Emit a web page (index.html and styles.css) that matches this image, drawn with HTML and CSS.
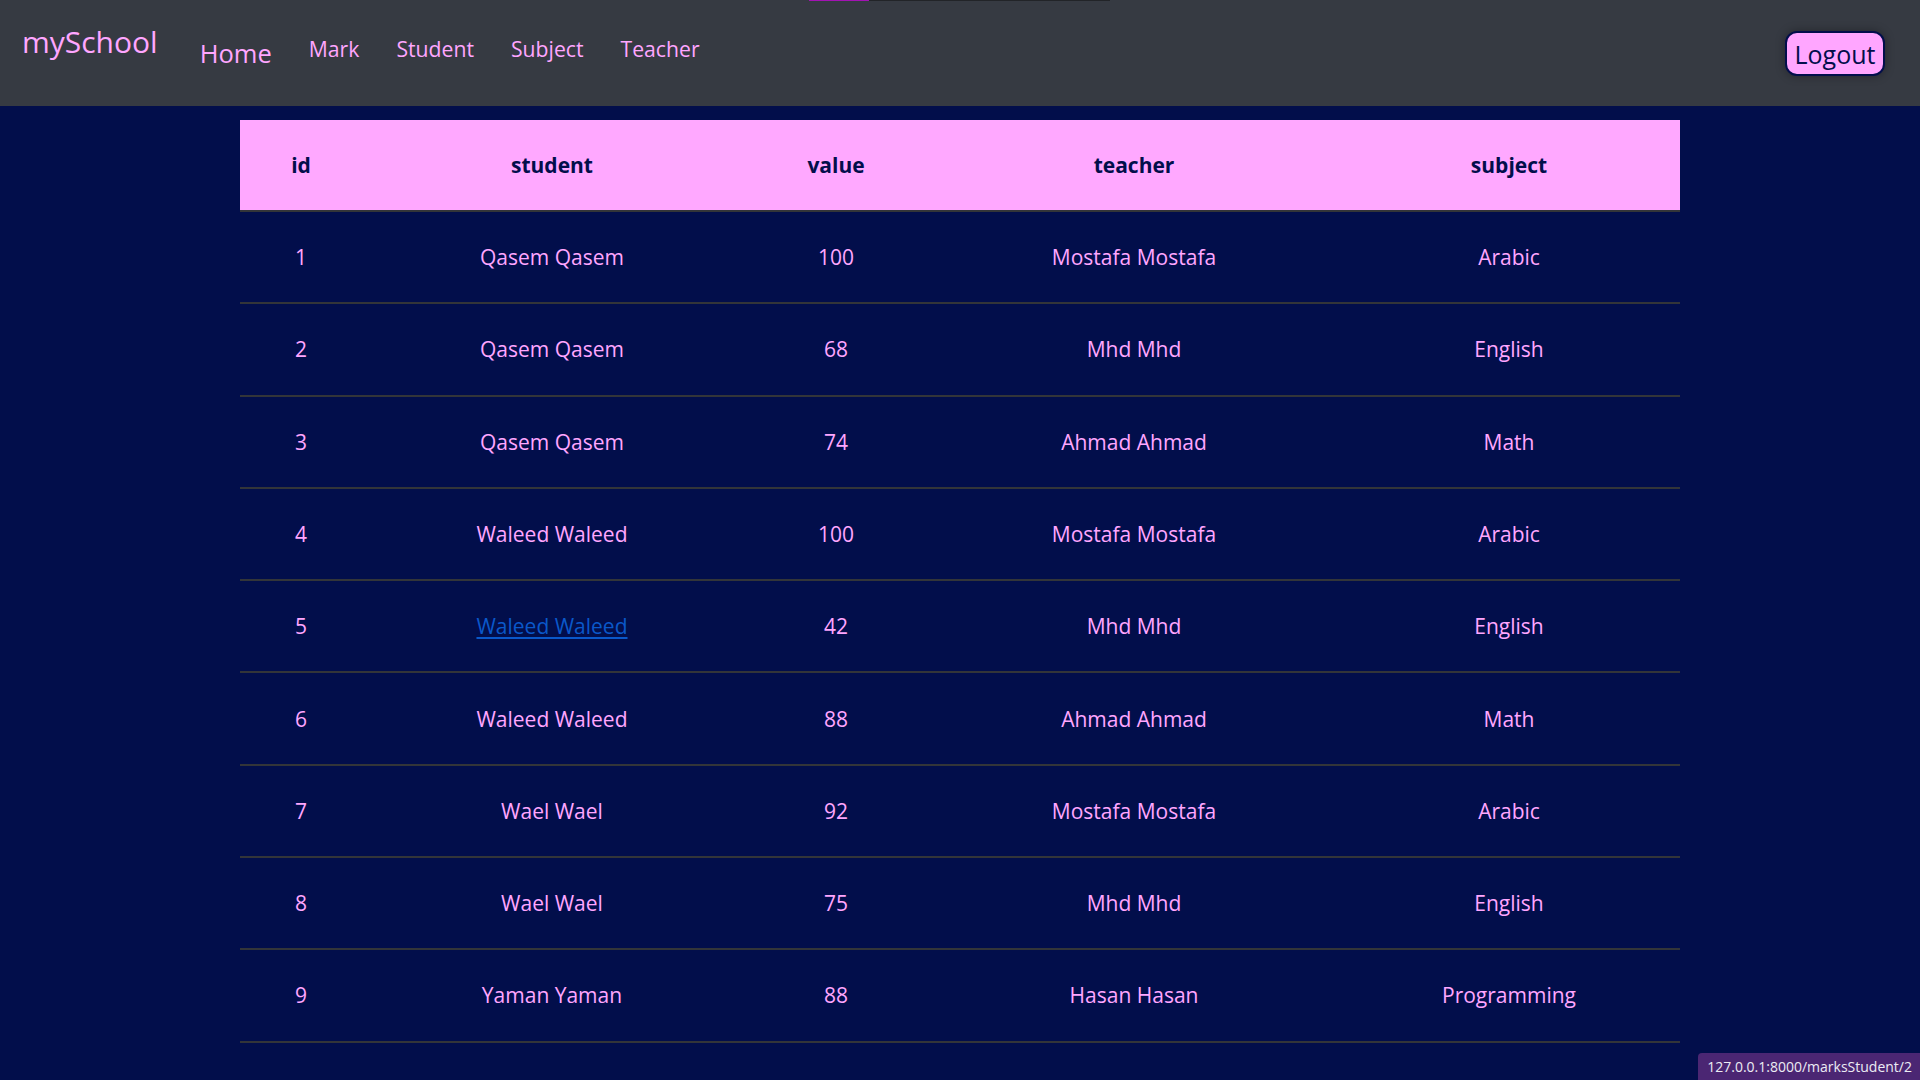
FILE: index.html
```html
<!DOCTYPE html>
<html lang="en">
<head>
<meta charset="utf-8">
<title>mySchool</title>
<link rel="stylesheet" href="styles.css">
</head>
<body>
<div class="loader"><div class="loader-fill"></div></div>
<header class="navbar">
  <a class="brand" href="#">mySchool</a>
  <nav class="nav-links">
    <a class="nav-home" href="#">Home</a>
    <a class="nav-link" href="#">Mark</a>
    <a class="nav-link" href="#">Student</a>
    <a class="nav-link" href="#">Subject</a>
    <a class="nav-link" href="#">Teacher</a>
  </nav>
  <button class="logout">Logout</button>
</header>
<main class="content">
  <table class="marks">
    <colgroup>
      <col class="c-id"><col class="c-student"><col class="c-value"><col class="c-teacher"><col class="c-subject">
    </colgroup>
    <thead>
      <tr><th>id</th><th>student</th><th>value</th><th>teacher</th><th>subject</th></tr>
    </thead>
    <tbody>
      <tr><td>1</td><td><a href="#">Qasem Qasem</a></td><td>100</td><td>Mostafa Mostafa</td><td>Arabic</td></tr>
      <tr><td>2</td><td><a href="#">Qasem Qasem</a></td><td>68</td><td>Mhd Mhd</td><td>English</td></tr>
      <tr><td>3</td><td><a href="#">Qasem Qasem</a></td><td>74</td><td>Ahmad Ahmad</td><td>Math</td></tr>
      <tr><td>4</td><td><a href="#">Waleed Waleed</a></td><td>100</td><td>Mostafa Mostafa</td><td>Arabic</td></tr>
      <tr><td>5</td><td><a class="hovered" href="#">Waleed Waleed</a></td><td>42</td><td>Mhd Mhd</td><td>English</td></tr>
      <tr><td>6</td><td><a href="#">Waleed Waleed</a></td><td>88</td><td>Ahmad Ahmad</td><td>Math</td></tr>
      <tr><td>7</td><td><a href="#">Wael Wael</a></td><td>92</td><td>Mostafa Mostafa</td><td>Arabic</td></tr>
      <tr><td>8</td><td><a href="#">Wael Wael</a></td><td>75</td><td>Mhd Mhd</td><td>English</td></tr>
      <tr><td>9</td><td><a href="#">Yaman Yaman</a></td><td>88</td><td>Hasan Hasan</td><td>Programming</td></tr>
    </tbody>
  </table>
</main>
<div class="status">127.0.0.1:8000/marksStudent/2</div>
</body>
</html>
```
FILE: styles.css
```css
* { box-sizing: border-box; }
html, body { margin: 0; padding: 0; }
body {
  background: #020e4b;
  font-family: "Open Sans", "Noto Sans", sans-serif;
  color: #ffa6ff;
  overflow: hidden;
}
.loader {
  position: absolute;
  top: 0;
  left: 809px;
  width: 301px;
  height: 1px;
  background: #222428;
  z-index: 5;
}
.loader-fill { width: 60px; height: 1px; background: #a313b3; }

.navbar {
  height: 106px;
  background: #363a42;
  display: flex;
  align-items: flex-start;
  padding: 0 35px 0 22px;
}
.brand {
  color: #ffa6ff;
  text-decoration: none;
  font-size: 30px;
  line-height: 44px;
  margin-top: 20px;
}
.nav-links {
  display: flex;
  align-items: flex-start;
  margin-left: 42px;
}
.nav-home {
  color: #ffa6ff;
  text-decoration: none;
  font-size: 25.5px;
  line-height: 38px;
  margin-top: 34px;
  margin-right: 18px;
}
.nav-link {
  color: #ffa6ff;
  text-decoration: none;
  font-size: 21.2px;
  line-height: 32px;
  margin-top: 33px;
  padding: 0 18px 0 19px;
}
.logout {
  margin-left: auto;
  margin-top: 31px;
  width: 100px;
  height: 45px;
  background: #ffa6ff;
  color: #020e4b;
  border: 2px solid #020e4b;
  border-radius: 12px;
  font-family: "Open Sans", "Noto Sans", sans-serif;
  font-size: 25px;
  line-height: 38px;
  padding: 0;
  box-shadow: 0 0 10px rgba(0, 0, 0, 0.35);
}

.content {
  padding-top: 14px;
}
.marks {
  width: 1440px;
  margin: 0 auto;
  border-collapse: collapse;
  table-layout: fixed;
}
.c-id { width: 122px; }
.c-student { width: 380px; }
.c-value { width: 188px; }
.c-teacher { width: 408px; }
.c-subject { width: 342px; }
.marks th {
  background: #ffa8ff;
  color: #020e4b;
  font-weight: 700;
  font-size: 21px;
  line-height: 32px;
  padding: 29px 0;
  text-align: center;
  border-bottom: 2px solid #333539;
}
.marks td {
  font-size: 21px;
  line-height: 32px;
  padding: 29.15px 0;
  text-align: center;
  border-bottom: 2px solid #333539;
  color: #ffa6ff;
}
.marks td a { color: #ffa6ff; text-decoration: none; }
.marks td a.hovered { color: #0a58ca; text-decoration: underline; text-underline-offset: 3px; }

.status {
  position: fixed;
  right: 0;
  bottom: 0;
  height: 27px;
  padding: 0 8px 0 9px;
  background: #4b2673;
  color: #ececf4;
  font-family: "Open Sans", "Noto Sans", sans-serif;
  font-size: 14px;
  line-height: 27px;
  border-top-left-radius: 4px;
}
```
